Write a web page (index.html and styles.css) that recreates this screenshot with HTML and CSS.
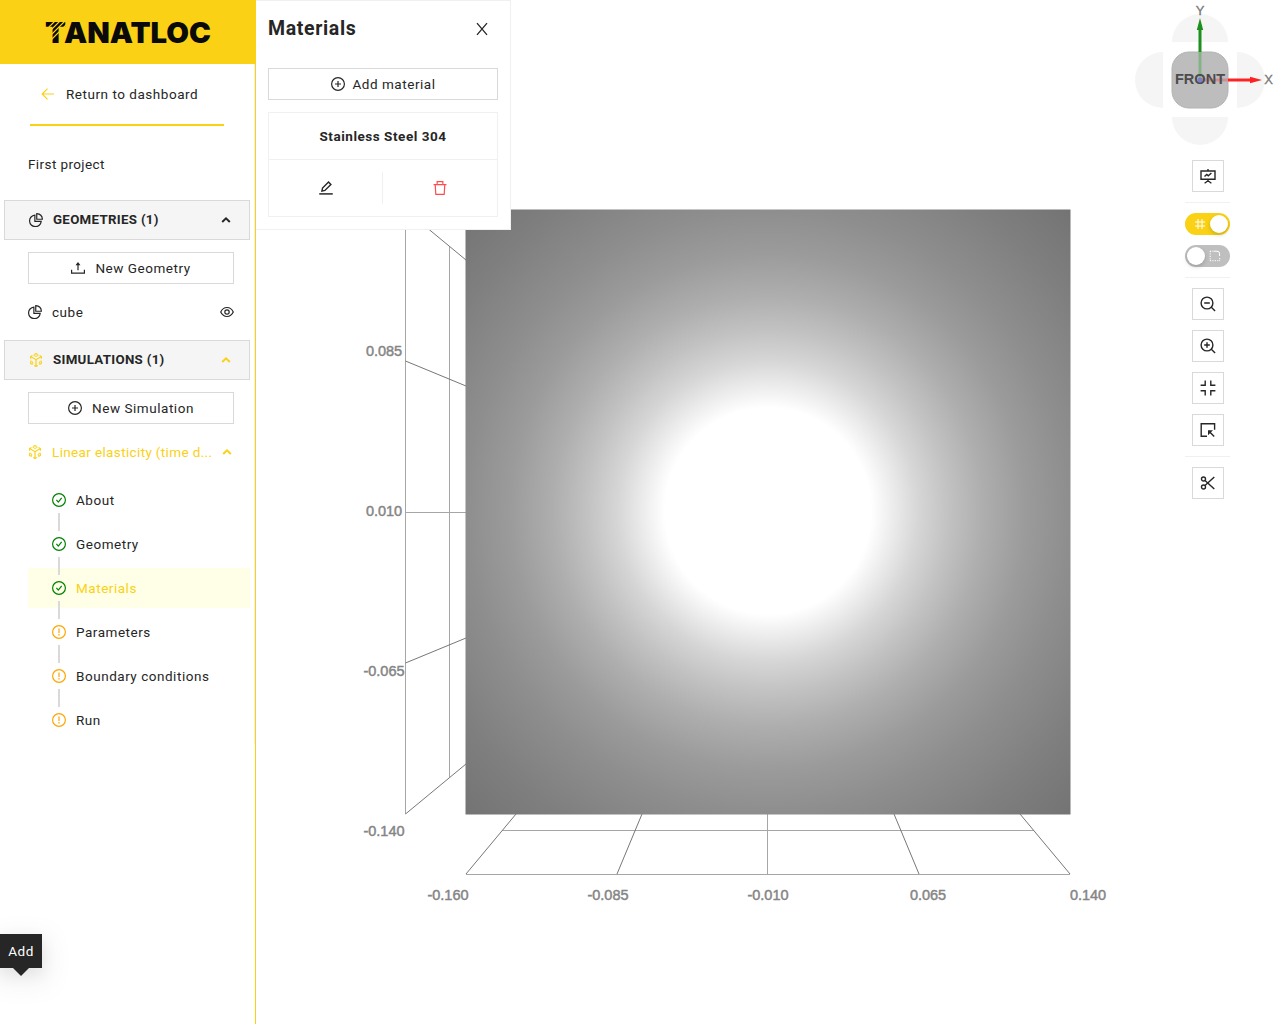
FILE: index.html
```html
<!DOCTYPE html>
<html lang="en">
<head>
<meta charset="utf-8">
<title>Tanatloc</title>
<link rel="stylesheet" href="styles.css">
</head>
<body>
<svg class="sprite" aria-hidden="true">
  <defs>
    <symbol id="i-plus" viewBox="64 64 896 896"><circle cx="512" cy="512" r="410"/><path d="M320 512h384M512 320v384"/></symbol>
    <symbol id="i-check" viewBox="64 64 896 896"><circle cx="512" cy="512" r="410"/><path d="M345 500l123 145 215-275"/></symbol>
    <symbol id="i-warn" viewBox="64 64 896 896"><circle cx="512" cy="512" r="410"/><path d="M512 280v300M512 640v96"/></symbol>
    <symbol id="i-pie" viewBox="64 64 896 896"><path d="M440 196A372 372 0 1 0 844 600H440z"/><path d="M560 105v360h362C910 270 760 118 560 105z"/></symbol>
    <symbol id="i-cube" viewBox="64 64 896 896"><path d="M400 165L512 105l112 60M740 225l115 65v140M855 590v140l-115 70M624 860l-112 60-112-60M284 800l-115-70V590M169 430V290l115-65"/><path d="M169 290l343 200 343-200M512 490v430"/><path d="M350 200l162 90 162-90M169 560l130 75v150M855 560l-130 75v150" stroke-width="60"/></symbol>
    <symbol id="i-up" viewBox="0 0 14 14"><path d="M3.2 9L7 5.3 10.8 9"/></symbol>
    <symbol id="i-upload" viewBox="64 64 896 896"><path d="M102 624v215h820V624M512 660V230M430 300l82-110 82 110z"/></symbol>
    <symbol id="i-eye" viewBox="64 64 896 896"><path d="M110 512C200 320 335 225 512 225s312 95 402 287C824 704 689 799 512 799S200 704 110 512z"/><circle cx="512" cy="512" r="140"/></symbol>
    <symbol id="i-back" viewBox="64 64 896 896"><path d="M900 512H150M480 170L140 512l340 342"/></symbol>
    <symbol id="i-close" viewBox="0 0 14 14"><path d="M2 1.2L12 12.8M12 1.2L2 12.8"/></symbol>
    <symbol id="i-edit" viewBox="64 64 896 896"><path d="M80 890h864" stroke-width="95"/><path d="M250 715l40-195 385-385 150 150-385 385z" stroke-width="90"/></symbol>
    <symbol id="i-trash" viewBox="64 64 896 896"><path d="M100 292h824M330 280V105h364v175M205 292l38 630h538l38-630"/></symbol>
    <symbol id="i-board" viewBox="0 0 16 16"><path d="M1 3h14v8.3H1zM8 1v2M8 11.3v1.500M4.600 15.200L8 12.800l3.400 2.400M4.500 8.600L6.800 6.400 8.300 7.800 11.400 5"/></symbol>
    <symbol id="i-zoomout" viewBox="0 0 16 16"><circle cx="7" cy="7" r="5.9"/><path d="M4.200 7h5.600M11.300 11.300l3.800 3.800"/></symbol>
    <symbol id="i-zoomin" viewBox="0 0 16 16"><circle cx="7" cy="7" r="5.9"/><path d="M4.200 7h5.600M7 4.200v5.600M11.300 11.300l3.800 3.800"/></symbol>
    <symbol id="i-compress" viewBox="0 0 16 16"><path d="M.6 5.200h4.600V.6M15.400 5.200h-4.600V.6M.6 10.800h4.600v4.600M15.400 10.800h-4.600v4.600"/></symbol>
    <symbol id="i-select" viewBox="0 0 16 16"><path d="M7 14.300H1.200V1.700h13.400v6"/><path d="M14.200 14.500L9.500 9.800M8.700 11.500V8.900h2.600z"/></symbol>
    <symbol id="i-scissors" viewBox="0 0 16 16"><circle cx="3.500" cy="4" r="2"/><circle cx="3.500" cy="12" r="2"/><path d="M5 5.400L14.300 14M5 10.600L14.300 2"/></symbol>
    <symbol id="i-grid" viewBox="0 0 12 12"><path d="M1 4h10M1 8h10M4 1v10M8 1v10"/></symbol>
    <symbol id="i-radius" viewBox="0 0 12 12"><path d="M5 1.200h3a2.600 2.600 0 0 1 2.600 2.600V6"/><path d="M1.200 1v10M1 10.700h10M10.700 8v3M1 1.200h4" stroke-dasharray="1.200 1.200"/></symbol>
  </defs>
</svg>

<div class="app">
  <aside class="sidebar">
    <header class="brand">
      <svg class="logo" width="180" height="48" viewBox="0 0 180 48">
        <text class="logo-text" x="3" y="35" textLength="21" lengthAdjust="spacingAndGlyphs">T</text>
        <path class="logo-cut" d="M1 25L14 12M5 26L19 12M9 27L24 12M9 32L25 16"/>
        <text class="logo-text" x="22" y="35" textLength="147" lengthAdjust="spacingAndGlyphs">ANATLOC</text>
      </svg>
    </header>
    <div class="side-body">
      <a class="back"><svg class="icon"><use href="#i-back"/></svg><span>Return to dashboard</span></a>
      <div class="project">First project</div>

      <div class="group"><svg class="icon"><use href="#i-pie"/></svg><span class="group-name">GEOMETRIES (1)</span><svg class="icon chevron"><use href="#i-up"/></svg></div>
      <button class="btn side-btn"><svg class="icon"><use href="#i-upload"/></svg><span>New Geometry</span></button>
      <div class="row"><svg class="icon"><use href="#i-pie"/></svg><span class="row-name">cube</span><svg class="icon"><use href="#i-eye"/></svg></div>

      <div class="group sim"><svg class="icon gold"><use href="#i-cube"/></svg><span class="group-name">SIMULATIONS (1)</span><svg class="icon chevron gold"><use href="#i-up"/></svg></div>
      <button class="btn side-btn"><svg class="icon"><use href="#i-plus"/></svg><span>New Simulation</span></button>
      <div class="row gold"><svg class="icon"><use href="#i-cube"/></svg><span class="row-name study">Linear elasticity (time d...</span><svg class="icon chevron"><use href="#i-up"/></svg></div>

      <div class="steps">
        <div class="step"><svg class="icon ok"><use href="#i-check"/></svg><span>About</span></div>
        <div class="step"><svg class="icon ok"><use href="#i-check"/></svg><span>Geometry</span></div>
        <div class="step active"><svg class="icon ok"><use href="#i-check"/></svg><span>Materials</span></div>
        <div class="step"><svg class="icon todo"><use href="#i-warn"/></svg><span>Parameters</span></div>
        <div class="step"><svg class="icon todo"><use href="#i-warn"/></svg><span>Boundary conditions</span></div>
        <div class="step"><svg class="icon todo"><use href="#i-warn"/></svg><span>Run</span></div>
      </div>
    </div>
    <div class="tooltip">Add</div>
  </aside>

  <main class="view">
    <svg class="scene" width="1024" height="1024" viewBox="256 0 1024 1024">
      <defs>
        <radialGradient id="light" gradientUnits="userSpaceOnUse" cx="768" cy="511" r="430">
          <stop offset="0" stop-color="#fff"/><stop offset=".24" stop-color="#fff"/>
          <stop offset=".28" stop-color="#f0f0f0"/><stop offset=".35" stop-color="#d6d6d6"/>
          <stop offset=".42" stop-color="#c2c2c2"/><stop offset=".5" stop-color="#aeaeae"/>
          <stop offset=".6" stop-color="#9b9b9b"/><stop offset=".7" stop-color="#8e8e8e"/>
          <stop offset=".85" stop-color="#7f7f7f"/><stop offset="1" stop-color="#737373"/>
        </radialGradient>
      </defs>
      <g class="mesh">
        <path d="M405.500 210V814M449.500 246V777M405.500 512.500H466M466 874.500H1070M502 830.500H1034M767.500 814V874"/>
        <path class="slope" d="M405.500 210L466 260M405.500 361L466 386M405.500 663L466 638M405.500 814L466 764M516 814L466 874M642 814L617 874M894 814L919 874M1020 814L1070 874"/>
      </g>
      <rect x="465.500" y="209.500" width="605" height="605" fill="url(#light)"/>
      <g class="ticks">
        <text x="384" y="356" textLength="36">0.085</text>
        <text x="384" y="516" textLength="36">0.010</text>
        <text x="384" y="676" textLength="41">-0.065</text>
        <text x="384" y="836" textLength="41">-0.140</text>
        <text x="448" y="900" textLength="41">-0.160</text>
        <text x="608" y="900" textLength="41">-0.085</text>
        <text x="768" y="900" textLength="41">-0.010</text>
        <text x="928" y="900" textLength="36">0.065</text>
        <text x="1088" y="900" textLength="36">0.140</text>
      </g>
      <g class="compass">
        <path class="petal" d="M1172 42a28 28 0 0 1 56 0zM1172 117a28 28 0 0 0 56 0zM1163 52a28 28 0 0 0 0 56zM1237 52a28 28 0 0 1 0 56z"/>
        <rect class="face" x="1172" y="52" width="56" height="56" rx="17"/>
        <path class="y-in" d="M1200 52V80"/><path class="y-out" d="M1200 30V52"/><path class="y-tip" d="M1200 18l3.200 12h-6.400z"/>
        <path class="x-in" d="M1200 80H1228"/><path class="x-out" d="M1228 80H1250"/><path class="x-tip" d="M1262 80l-12 3.200v-6.400z"/>
        <text class="front" x="1200" y="84" textLength="50" lengthAdjust="spacingAndGlyphs">FRONT</text>
        <circle cx="1200" cy="80" r="2.500" fill="#7d7dd0"/>
        <text class="axis" x="1200" y="15">Y</text><text class="axis" x="1268.500" y="84">X</text>
      </g>
    </svg>

    <section class="panel">
      <div class="panel-head"><h1>Materials</h1><svg class="icon close"><use href="#i-close"/></svg></div>
      <button class="btn add"><svg class="icon"><use href="#i-plus"/></svg><span>Add material</span></button>
      <div class="card">
        <div class="card-name"><span>Stainless Steel 304</span></div>
        <div class="card-actions"><div><svg class="icon"><use href="#i-edit"/></svg></div><div class="danger"><svg class="icon"><use href="#i-trash"/></svg></div></div>
      </div>
    </section>

    <nav class="tools">
      <button class="tool"><svg class="icon"><use href="#i-board"/></svg></button>
      <hr>
      <div class="switch on"><svg class="icon"><use href="#i-grid"/></svg><i class="knob"></i></div>
      <div class="switch"><i class="knob"></i><svg class="icon"><use href="#i-radius"/></svg></div>
      <hr>
      <button class="tool"><svg class="icon"><use href="#i-zoomout"/></svg></button>
      <button class="tool"><svg class="icon"><use href="#i-zoomin"/></svg></button>
      <button class="tool"><svg class="icon"><use href="#i-compress"/></svg></button>
      <button class="tool"><svg class="icon"><use href="#i-select"/></svg></button>
      <hr>
      <button class="tool"><svg class="icon"><use href="#i-scissors"/></svg></button>
    </nav>
  </main>
</div>
</body>
</html>
```
FILE: styles.css
```css
* { box-sizing: border-box; }
body { margin: 0; background: #fff; color: #262626; font: 13.5px/22px Roboto, "Noto Sans", sans-serif; letter-spacing: .53px; overflow: hidden; }
button { font: inherit; letter-spacing: inherit; color: inherit; }
span { white-space: nowrap; }
.sprite { display: none; }
.app { display: flex; height: 1024px; }

.icon { flex: none; display: block; width: 14px; height: 14px; fill: none; stroke: currentColor; stroke-width: 76; }
.gold { color: #fad114; }
.ok { color: #008000; }
.todo { color: #ffa500; }

.sidebar { position: relative; width: 256px; flex: none; border-right: 1px solid #fad114; }
.brand { width: 256px; height: 64px; background: #fad114; display: flex; align-items: center; padding-left: 42px; }
.logo-text { font: 900 29px Inter, sans-serif; letter-spacing: 0; fill: #0a0a0a; }
.logo-cut { stroke: #fad114; stroke-width: 1.1; fill: none; }

.side-body { height: 680px; border-right: 1px solid #f0f0f0; padding: 10px 4px 0; }
.back { display: flex; align-items: center; gap: 11px; width: 194px; height: 52px; margin-left: 26px; padding: 0 0 11px 11px; border-bottom: 2px solid #fad114; }
.back .icon { color: #fad114; }
.project { height: 74px; padding: 27px 24px 0; letter-spacing: .4px; }
.group { display: flex; align-items: center; width: 246px; height: 40px; padding: 0 16px 0 24px; background: #f5f5f5; border: 1px solid #d9d9d9; font-size: 13.3px; font-weight: 700; letter-spacing: .3px; }
.group-name { flex: 1; margin-left: 10px; }
.chevron { stroke-width: 2; }
.btn { display: flex; align-items: center; justify-content: center; gap: 10px; height: 32px; padding: 0; border: 1px solid #d9d9d9; background: #fff; }
.add { gap: 8px; }
.side-btn { width: 206px; margin: 12px 0 8px 24px; }
.row { display: flex; align-items: center; width: 206px; height: 40px; margin-left: 24px; }
.row-name { flex: 1; margin-left: 10px; }
.study { letter-spacing: .36px; }
.sim { margin-top: 8px; }
.steps { display: flex; flex-direction: column; gap: 4px; padding: 8px 0 0 24px; }
.step { position: relative; display: flex; align-items: center; gap: 10px; width: 222px; height: 40px; padding-left: 24px; }
.step:not(:last-child)::after { content: ""; position: absolute; z-index: 1; left: 30px; top: 33px; width: 2px; height: 18px; background: #d9d9d9; }
.step.active { background: #feffe6; color: #fad114; }
.tooltip { position: absolute; left: 0; top: 934px; width: 42px; height: 34px; background: #262626; color: #fff; text-align: center; line-height: 34px; box-shadow: 0 6px 16px rgba(0,0,0,.08), 0 9px 28px 8px rgba(0,0,0,.05); }
.tooltip::after { content: ""; position: absolute; left: 13px; top: 34px; border: 8px solid transparent; border-top-color: #262626; border-bottom: 0; }

.view { position: relative; flex: 1; }
.scene { display: block; letter-spacing: 0; }
.mesh { fill: none; stroke: #a6a6a6; stroke-width: 1; }
.mesh .slope { stroke: #777; }
.ticks text { font: 14.5px "Liberation Sans", sans-serif; fill: #858585; stroke: #858585; stroke-width: .45; text-anchor: middle; }
.petal { fill: #f5f5f5; }
.face { fill: #bdbdbd; stroke: #b3b3b3; }
.y-in, .y-out, .x-in, .x-out { fill: none; stroke-width: 3; }
.y-in { stroke: #86b386; }
.y-out { stroke: #1c8f1c; }
.y-tip { fill: #1c8f1c; }
.x-in { stroke: #ce8f96; }
.x-out { stroke: #f22; }
.x-tip { fill: #f22; }
.front { font: 700 14px "Liberation Sans", sans-serif; fill: #4c4c4c; text-anchor: middle; }
.axis { font: 13px "Liberation Sans", sans-serif; fill: #777; stroke: #777; stroke-width: .3; text-anchor: middle; }

.panel { position: absolute; left: 0; top: 0; width: 255px; height: 230px; padding: 0 12px; background: #fff; border: 1px solid #f0f0f0; border-left: 0; display: flex; flex-direction: column; }
.panel-head { display: flex; align-items: center; justify-content: space-between; height: 55px; margin-bottom: 12px; padding-right: 9px; }
.panel h1 { margin: 0; font-size: 19.5px; font-weight: 700; letter-spacing: .65px; }
.close { stroke-width: 1.3; }
.card { display: flex; flex-direction: column; height: 105px; margin-top: 12px; border: 1px solid #f0f0f0; }
.card-name { display: flex; align-items: center; justify-content: center; height: 47px; border-bottom: 1px solid #f0f0f0; font-weight: 700; }
.card-actions { display: flex; margin: 12px 0; }
.card-actions div { width: 113px; height: 32px; display: flex; align-items: center; justify-content: center; }
.card-actions div + div { width: 115px; border-left: 1px solid #f0f0f0; }
.danger { color: #ff4d4f; }

.tools { position: absolute; left: 929px; top: 160px; width: 45px; display: flex; flex-direction: column; align-items: center; gap: 10px; }
.tools hr { width: 45px; height: 1px; margin: 0; border: 0; background: #f0f0f0; }
.tool { display: flex; align-items: center; justify-content: center; width: 32px; height: 32px; padding: 0; border: 1px solid #d9d9d9; background: #fff; }
.tool .icon { width: 16px; height: 16px; stroke-width: 1.4; }
.switch { display: flex; align-items: center; justify-content: space-between; width: 45px; height: 22px; padding: 0 9px 0 2px; border-radius: 11px; background: #bfbfbf; color: #fff; }
.switch.on { padding: 0 2px 0 9px; background: #fad114; }
.switch .icon { width: 12px; height: 12px; stroke-width: 1; }
.knob { width: 18px; height: 18px; border-radius: 50%; background: #fff; box-shadow: 0 2px 4px rgba(0,35,11,.2); }
```
